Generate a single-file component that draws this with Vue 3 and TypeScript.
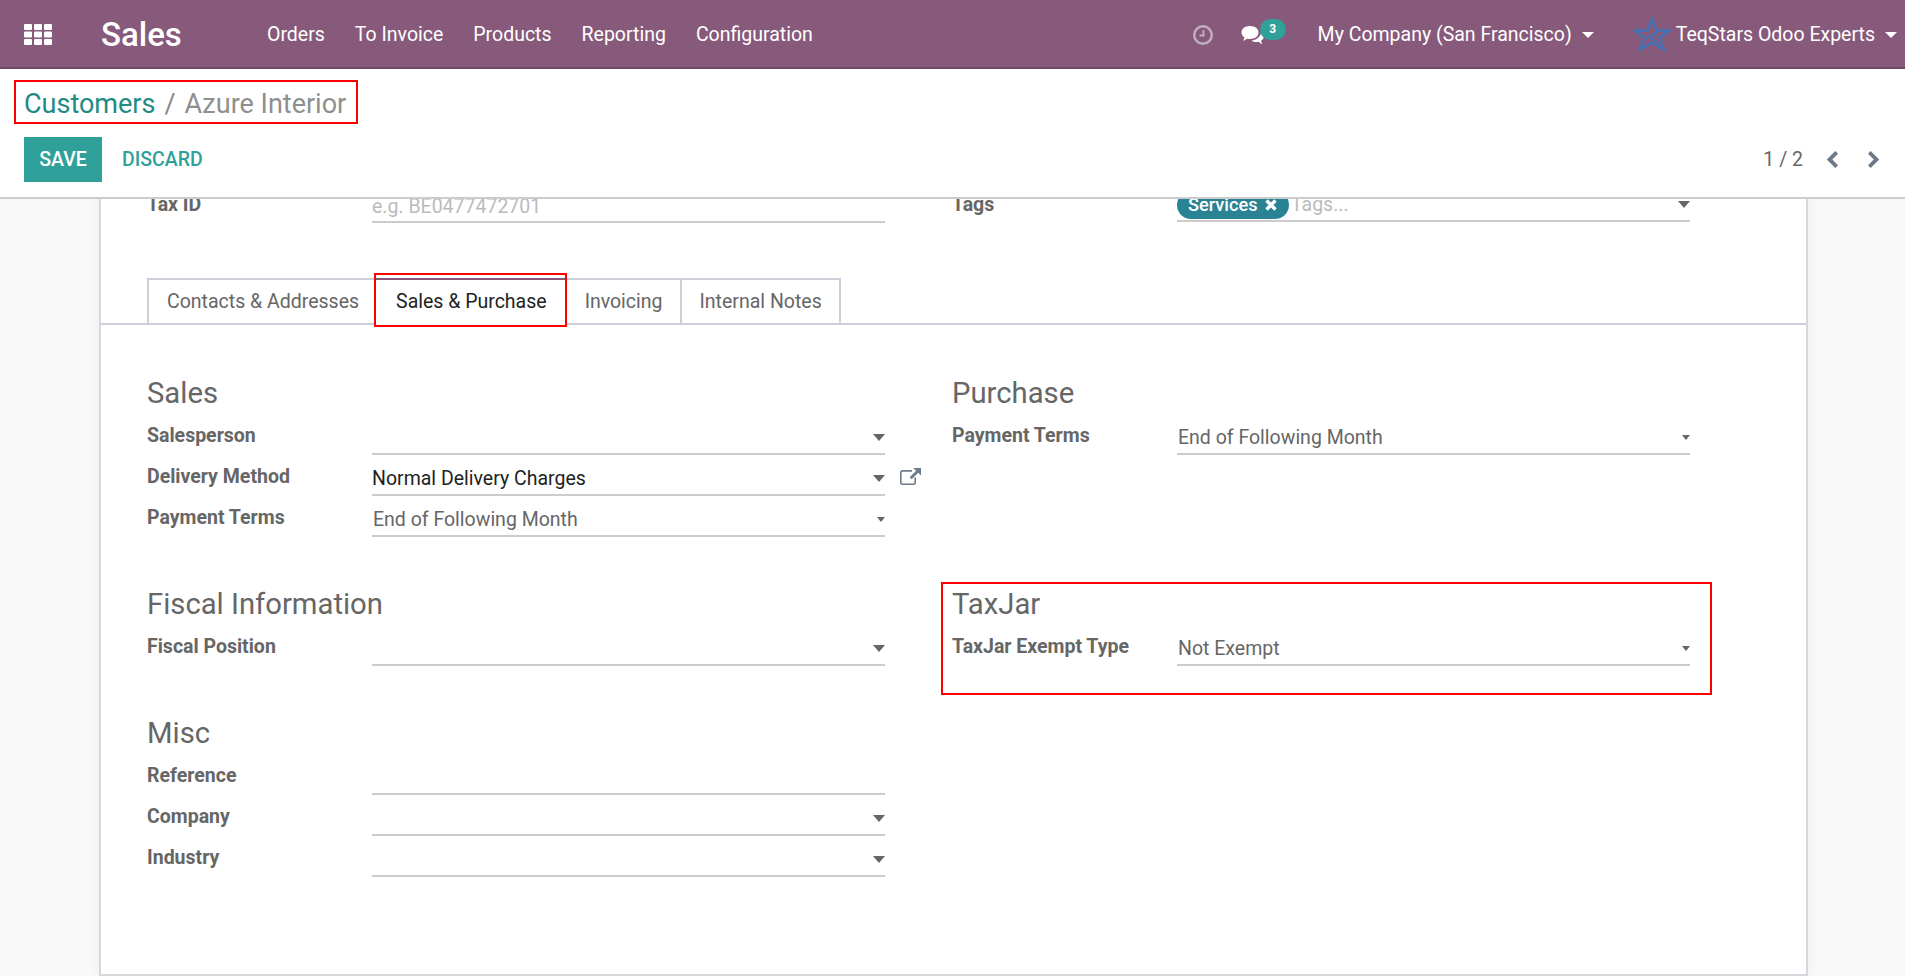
<script setup lang="ts">
const menus: string[] = ['Orders', 'To Invoice', 'Products', 'Reporting', 'Configuration']
const tabs: string[] = ['Contacts & Addresses', 'Sales & Purchase', 'Invoicing', 'Internal Notes']
const cells: number[] = [0, 1, 2, 3, 4, 5, 6, 7, 8]
</script>

<template>
  <div class="page">
    <header class="navbar">
      <svg class="apps" width="28" height="21" viewBox="0 0 28 21" fill="#fff">
        <rect v-for="c in cells" :key="c" :x="(c % 3) * 10" :y="Math.floor(c / 3) * 7.5" width="8" height="6" rx="1" />
      </svg>
      <span class="brand">Sales</span>
      <nav class="menu"><a v-for="m in menus" :key="m">{{ m }}</a></nav>
      <div class="systray">
        <svg class="clock" width="20" height="20" viewBox="0 0 20 20" fill="none" stroke="#c4b1be" stroke-width="2.4"><circle cx="10" cy="10" r="8.800" /><path d="M10.500 5v5.500H6.500" stroke-width="1.800" /></svg>
        <span class="chat">
          <svg width="24" height="20" viewBox="0 0 24 20" fill="#fff"><path d="M9 1C4 1 .5 3.800.5 7.500c0 2.100 1.200 3.900 3 5.100L2 16l4.200-2.300c.9.200 1.800.3 2.800.3 5 0 8.500-2.800 8.500-6.500S14 1 9 1z" /><path d="M19.500 9c-.6 3.300-4 6-9 6.400 1.300 1 3 1.600 5 1.600.6 0 1.200 0 1.800-.2l4 2.700-1.300-3.800c1.700-1 2.800-2.500 2.800-4 0-1-.8-2-3.300-2.700z" /></svg>
          <span class="badge">3</span>
        </span>
        <span class="company">My Company (San Francisco)<i class="caret" /></span>
        <svg class="star" width="38" height="34" viewBox="0 0 38 34" fill="none" stroke="#4272b8" stroke-width="2.4"><path d="M19 2l4.500 11.500L36 13.500 26.500 21 31 32.500 19 25.500 7 32.500 11.500 21 2 13.500 14.500 13.500z" /><path d="M13 21l11-6-6 6 6 4" stroke-width="1.700" /></svg>
        <span class="user">TeqStars Odoo Experts<i class="caret" /></span>
      </div>
    </header>

    <section class="panel">
      <div class="crumbs">
        <div class="mark crumb-box"><a>Customers</a><span class="sep">/</span><span class="cur">Azure Interior</span></div>
      </div>
      <div class="actions">
        <div class="left">
          <button class="save">SAVE</button>
          <button class="discard">DISCARD</button>
        </div>
        <div class="pager">
          <span>1 / 2</span>
          <svg class="prev" width="13" height="17" viewBox="0 0 13 17" fill="#6c7a89"><path d="M13 2.800 10.300 0 1.800 8.500l8.500 8.500 2.700-2.800-5.700-5.700z" /></svg>
          <svg class="next-page" width="13" height="17" viewBox="0 0 13 17" fill="#6c7a89"><path d="M0 2.800 2.700 0l8.500 8.500-8.500 8.500L0 14.200l5.700-5.700z" /></svg>
        </div>
      </div>
    </section>

    <main class="scroller">
      <div class="sheet">
        <div class="cols top">
          <div class="row"><label>Tax ID</label><div class="field placeholder">e.g. BE0477472701</div></div>
          <div class="row">
            <label>Tags</label>
            <div class="field tags">
              <span class="tag">Services<svg width="12" height="12" viewBox="0 0 12 12" fill="none" stroke="#fff" stroke-width="3.400"><path d="M1.500 1.500l9 9M10.500 1.500l-9 9" /></svg></span>
              <span class="ph">Tags...</span><i class="arrow" />
            </div>
          </div>
        </div>

        <div class="tabs">
          <a v-for="(t, i) in tabs" :key="t" :class="{ active: i === 1 }">{{ t }}</a>
          <span class="mark tab-box" />
        </div>

        <div class="cols body">
          <div class="col">
            <h3>Sales</h3>
            <div class="row"><label>Salesperson</label><div class="field"><i class="arrow" /></div></div>
            <div class="row">
              <label>Delivery Method</label>
              <div class="field dark">Normal Delivery Charges<i class="arrow" />
                <svg class="ext" width="21" height="17" viewBox="0 0 21 17" fill="#6c7a89"><path d="M16 9.500v5A2.500 2.500 0 0 1 13.500 17h-11A2.500 2.500 0 0 1 0 14.500v-10A2.500 2.500 0 0 1 2.500 2H12v1.700H2.500a.9.9 0 0 0-.9.9v9.900a.9.9 0 0 0 .9.9h11a.9.9 0 0 0 .9-.9v-5z" /><path d="M13 0h8v7.500l-2.800-2.800-6.500 6.500-2-2 6.500-6.500z" /></svg>
              </div>
            </div>
            <div class="row"><label>Payment Terms</label><div class="field sel">End of Following Month<i class="arrow small" /></div></div>

            <h3 class="next">Fiscal Information</h3>
            <div class="row"><label>Fiscal Position</label><div class="field"><i class="arrow" /></div></div>

            <h3 class="next">Misc</h3>
            <div class="row"><label>Reference</label><div class="field" /></div>
            <div class="row"><label>Company</label><div class="field"><i class="arrow" /></div></div>
            <div class="row"><label>Industry</label><div class="field"><i class="arrow" /></div></div>
          </div>

          <div class="col">
            <h3>Purchase</h3>
            <div class="row"><label>Payment Terms</label><div class="field sel">End of Following Month<i class="arrow small" /></div></div>

            <div class="taxjar mark">
              <h3>TaxJar</h3>
              <div class="row"><label>TaxJar Exempt Type</label><div class="field sel">Not Exempt<i class="arrow small" /></div></div>
            </div>
          </div>
        </div>
      </div>
    </main>
  </div>
</template>

<style>
html, body { margin: 0; background: #f9f9f9; }
</style>

<style scoped>
.page { width: 1905px; height: 976px; overflow: hidden; font-family: Roboto, "Noto Sans", sans-serif; font-size: 19.5px; color: #666; background: #f9f9f9; }
.navbar { height: 69px; box-sizing: border-box; border-bottom: 2px solid #6d4b63; background: #875a7b; color: #fff; display: flex; align-items: center; padding: 2px 8px 0 24px; }
.apps { flex: none; }
.brand { font-size: 33px; font-weight: 500; margin-left: 49px; width: 166px; }
.menu { display: flex; gap: 30px; }
.systray { margin-left: auto; display: flex; align-items: center; }
.clock { margin-right: 28px; }
.chat { position: relative; display: flex; margin-right: 53px; }
.badge { position: absolute; left: 19px; top: -6px; width: 26px; height: 21px; border-radius: 11px; background: #30a19a; font-size: 12px; font-weight: 700; line-height: 21px; text-align: center; }
.company { display: flex; align-items: center; }
.star { margin-left: 39px; margin-top: -2px; }
.user { display: flex; align-items: center; margin-left: 5px; }
.caret { width: 0; height: 0; border: 6px solid transparent; border-top-color: #fff; border-bottom: 0; margin-left: 10px; }
.panel { height: 130px; box-sizing: border-box; background: #fff; border-bottom: 2px solid #ccc; padding: 0 24px; display: flex; flex-direction: column; position: relative; z-index: 1; }
.crumbs { height: 68px; padding-top: 11px; box-sizing: border-box; }
.crumb-box { display: flex; align-items: center; gap: 9px; font-size: 27px; margin-left: -10px; padding: 4px 8px 0; height: 44px; width: 344px; box-sizing: border-box; }
.crumb-box a { color: #1f8b83; }
.sep { color: #888; }
.cur { color: #8f8f8f; }
.actions { display: flex; justify-content: space-between; }
.left { display: flex; align-items: center; }
.save { width: 78px; height: 45px; border: 0; background: #30a19a; color: #fff; font: 500 19.5px Roboto, sans-serif; }
.discard { margin-left: 20px; padding: 0; border: 0; background: none; color: #30a19a; font: 500 19.5px Roboto, sans-serif; }
.pager { display: flex; align-items: center; color: #666; }
.prev { margin-left: 22px; }
.next-page { margin-left: 30px; }
.scroller { height: 777px; overflow: hidden; }
.sheet { width: 1709px; height: 794px; box-sizing: border-box; margin: -17px 0 0 99px; background: #fff; border: 2px solid #d5d8dd; border-top: 0; box-shadow: 0 0 14px rgba(0, 0, 0, 0.05); }
.cols { display: grid; grid-template-columns: 805px 805px; padding-left: 46px; }
.top { height: 96px; }
.row { display: grid; grid-template-columns: 225px 513px; height: 41px; }
.row label { font-weight: 700; line-height: 43px; color: #666; }
.top .row label { line-height: 46px; }
.field { position: relative; box-sizing: border-box; height: 41px; padding-top: 8px; border-bottom: 2px solid #ccc; line-height: 32px; }
.placeholder { color: #bbb; padding-top: 9px; }
.dark { color: #222; }
.sel { padding-left: 1px; }
.arrow { position: absolute; right: 0; top: 20px; width: 0; height: 0; border: 6px solid transparent; border-top: 7px solid #666; border-bottom: 0; }
.arrow.small { top: 21px; border-width: 5px 4px 0; border-top-color: #666; }
.ext { position: absolute; left: 528px; top: 13px; }
.tags { display: flex; align-items: flex-end; height: 40px; padding: 0 0 1px; }
.tag { display: inline-flex; align-items: center; gap: 7px; box-sizing: border-box; width: 112px; height: 28px; padding-left: 11px; border-radius: 14px; background: #2a8395; color: #fff; font-weight: 500; font-size: 18.2px; line-height: 28px; }
.ph { color: #bbb; margin-left: 2px; align-self: center; padding-top: 9px; }
.tags .arrow { top: 19px; }
.tabs { position: relative; display: flex; height: 47px; box-sizing: border-box; padding-left: 46px; border-bottom: 2px solid #ccd0d8; }
.tabs a { box-sizing: border-box; height: 47px; padding: 0 17px 0 18px; border: 2px solid #ccd0d8; border-right-width: 0; line-height: 43px; background: #fff; }
.tabs a:last-of-type { border-right-width: 2px; }
.tabs a.active { color: #222; border: 0 solid #fff; border-top: 2px solid #875a7b; padding: 0 18px 0 20px; line-height: 43px; }
.tab-box { position: absolute; left: 273px; top: -5px; width: 193px; height: 54px; box-sizing: border-box; }
.body { padding-top: 47px; }
h3 { margin: 0; font-size: 29.25px; font-weight: 400; line-height: 42px; color: #666; }
h3.next { margin-top: 46px; }
.taxjar { margin-top: 127px; margin-left: -11px; padding-left: 9px; width: 771px; height: 113px; box-sizing: border-box; }
.taxjar h3 { margin-top: -1px; }
.mark { border: 2px solid #f00; }
</style>
